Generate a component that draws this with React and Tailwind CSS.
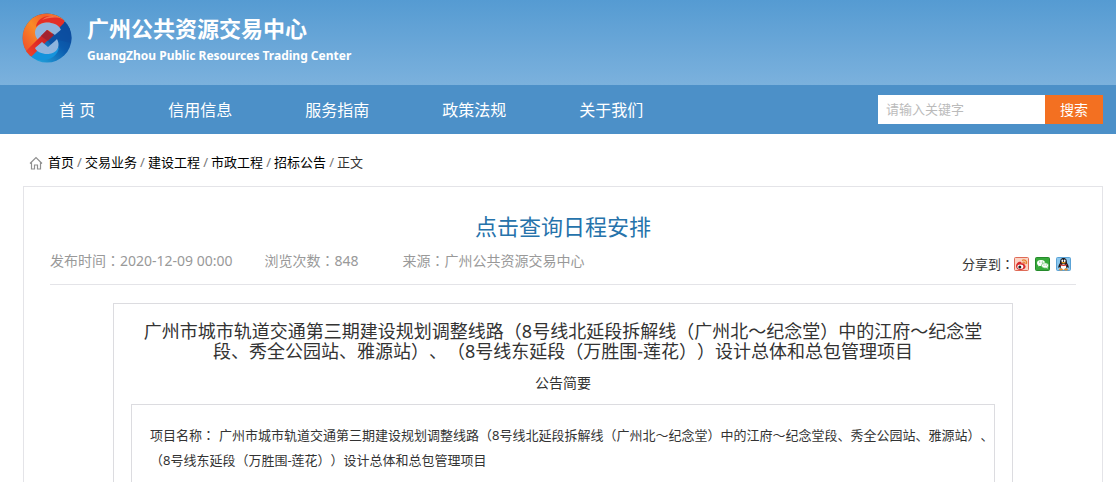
import React from "react";

const navItems = ["首 页", "信用信息", "服务指南", "政策法规", "关于我们"];
const crumbs = ["首页", "交易业务", "建设工程", "市政工程", "招标公告"];

// full-width colon, centred in its cell
function Colon() {
  return <span className="font-['Noto_Sans_CJK_TC',sans-serif]">：</span>;
}

function Logo() {
  return (
    <svg viewBox="0 0 50 50" className="size-[50px] shrink-0" aria-hidden="true">
      <defs>
        <clipPath id="disc">
          <circle cx="25" cy="25" r="24.5" />
        </clipPath>
        <linearGradient id="warm" x1="0" y1="0.7" x2="1" y2="0">
          <stop offset="0" stopColor="#f0502a" />
          <stop offset="0.35" stopColor="#f98b28" />
          <stop offset="0.6" stopColor="#f2622a" />
          <stop offset="1" stopColor="#f3a03a" />
        </linearGradient>
        <linearGradient id="cool" x1="1" y1="0" x2="0" y2="1">
          <stop offset="0" stopColor="#0c3f8e" />
          <stop offset="0.45" stopColor="#0b5cae" />
          <stop offset="1" stopColor="#2cc0ef" />
        </linearGradient>
        <linearGradient id="band" x1="1" y1="0" x2="0" y2="1">
          <stop offset="0" stopColor="#a81f2c" />
          <stop offset="0.5" stopColor="#e02a25" />
          <stop offset="1" stopColor="#f04a2a" />
        </linearGradient>
      </defs>
      <g clipPath="url(#disc)">
        <rect width="50" height="50" fill="url(#cool)" />
        <path d="M0 0H50V3L42 9L8 43L0 50Z" fill="url(#warm)" />
        <path d="M14 14C15 4 28 -1 42 7L42 10L37 15C31 8 20 8 14 14Z" fill="#e52e27" />
        <path d="M20 7C25 2 33 2 38 5C31 4 25 5 20 7Z" fill="#f4744a" />
        <path d="M37 34C36 46 20 51 9 44L6 41L14 34C20 42 30 42 37 34Z" fill="#1493dc" />
        <path d="M14 24C10 14 20 8 29 10C35 11 38 14 39 17L33 22L26 17L16 27Z" fill="#8fb4de" />
        <path d="M25 17L31 22L9 44L2 40Z" fill="url(#band)" />
        <path d="M25 17L32 22L26 28L19 23Z" fill="#a3222f" />
        <path d="M26 28L42 14L50 6V30L36 27L30 33Z" fill="#0d4d9f" opacity="0.7" />
        <path d="M35 26C40 36 32 42 23 41C18 40 14 38 13 35L20 29L26 34L33 28Z" fill="#8fb4de" />
      </g>
    </svg>
  );
}

function HomeIcon() {
  return (
    <svg viewBox="0 0 14 14" className="size-3.5" fill="none" stroke="#8f8f8f" strokeWidth="1.2" aria-hidden="true">
      <path d="M1 7.5L7 1.5L13 7.5M2.5 6.5V13H5.5V9H8.5V13H11.5V6.5" />
    </svg>
  );
}

function WeiboIcon() {
  return (
    <svg viewBox="0 0 16 16" className="size-4" aria-hidden="true">
      <rect x="0.5" y="1.5" width="14" height="13" rx="1" fill="#fbd3c4" stroke="#df6b57" />
      <path d="M8 4.5C10.5 3 13.5 5 12.5 8M8.5 6.5C10 5.5 11.5 6.5 11 8" fill="none" stroke="#e8842f" strokeWidth="1.2" />
      <path d="M2 10C2 7.5 5 5 7 6C8 6.5 7 7.5 8 7.5C10 7 11 8 10.5 9C13 10 11 14 6.5 14C4 14 2 12.5 2 10Z" fill="#d92b2b" />
      <ellipse cx="6.3" cy="10.7" rx="3" ry="2.2" fill="#fff" />
      <circle cx="5.8" cy="10.9" r="1.5" fill="#222" />
    </svg>
  );
}

function WechatIcon() {
  return (
    <svg viewBox="0 0 16 16" className="size-4" aria-hidden="true">
      <rect x="0.5" y="1.5" width="14" height="13" rx="1" fill="#36a93a" stroke="#258a2b" />
      <path d="M3.5 9L3.2 10.6L4.700 9.8L6 9Z" fill="#fff" />
      <ellipse cx="6" cy="7" rx="4" ry="3" fill="#fff" />
      <ellipse cx="10" cy="9.5" rx="3.5" ry="2.7" fill="#fff" stroke="#36a93a" strokeWidth="0.6" />
      <path d="M11 11.5L12.5 13L12.5 11Z" fill="#fff" />
      <g fill="#36a93a">
        <circle cx="4.7" cy="6" r="0.6" />
        <circle cx="7.3" cy="6" r="0.6" />
        <circle cx="9" cy="9" r="0.5" />
        <circle cx="11.2" cy="9" r="0.5" />
      </g>
    </svg>
  );
}

function QQIcon() {
  return (
    <svg viewBox="0 0 16 16" className="size-4" aria-hidden="true">
      <rect x="0.5" y="1.5" width="14" height="13" rx="1" fill="#8cc8ee" stroke="#5ba3d6" />
      <path d="M7.5 2C4.500 2 4 4.5 4 7C2.5 9 2 11 2.5 12L4 11L5 13H10L11 11L12.5 12C13 11 12.5 9 11 7C11 4.5 10.5 2 7.5 2Z" fill="#1b1b22" />
      <ellipse cx="7.5" cy="10.8" rx="2.7" ry="2.6" fill="#fff" />
      <ellipse cx="6.3" cy="4.8" rx="0.9" ry="1.2" fill="#fff" />
      <ellipse cx="8.7" cy="4.8" rx="0.9" ry="1.2" fill="#fff" />
      <ellipse cx="7.5" cy="6.8" rx="2.2" ry="0.8" fill="#f7a823" />
      <path d="M4 8C6 9.3 9 9.3 11 8V9.2C9 10.3 6 10.3 4 9.2Z" fill="#dd2d23" />
      <ellipse cx="5" cy="13.5" rx="2" ry="0.9" fill="#f0902a" />
      <ellipse cx="10" cy="13.5" rx="2" ry="0.9" fill="#f0902a" />
    </svg>
  );
}

export default function App() {
  return (
    <div className="min-h-screen bg-white font-['Noto_Sans','Noto_Sans_CJK_SC',sans-serif] text-[#333] [text-spacing-trim:space-all]">
      <header>
        <div className="flex h-[85px] items-start gap-[15px] bg-linear-to-b from-[#559bd2] to-[#7bb1dd] pt-[13px] pl-[22px] text-white">
          <Logo />
          <div className="pt-px font-bold">
            <h1 className="text-[22px] leading-7">广州公共资源交易中心</h1>
            <p className="text-xs leading-7">GuangZhou Public Resources Trading Center</p>
          </div>
        </div>
        <div className="flex h-[49px] items-center justify-between bg-[#4c90c8] pr-[13px] pl-[23px]">
          <nav className="flex gap-px text-base text-white">
            {navItems.map((item) => (
              <a key={item} href="#" className="px-9">{item}</a>
            ))}
          </nav>
          <form className="flex h-[29px]" onSubmit={(e) => e.preventDefault()}>
            <input
              type="text"
              aria-label="请输入关键字"
              placeholder="请输入关键字"
              className="w-[167px] bg-white px-2 text-[13px] outline-none placeholder:text-[#bbb]"
            />
            <button type="submit" className="w-[58px] bg-[#f37021] text-sm text-white">搜索</button>
          </form>
        </div>
      </header>

      <main className="pr-[13px] pl-[23px]">
        <div className="flex h-[52px] items-center pt-1.5 pl-1.5 text-[13px] text-black">
          <HomeIcon />
          <nav className="ml-[5px] flex">
            {crumbs.map((crumb) => (
              <React.Fragment key={crumb}>
                <a href="#">{crumb}</a>
                <span className="w-[11px] text-center text-[#777]">/</span>
              </React.Fragment>
            ))}
            <span className="text-[#333]">正文</span>
          </nav>
        </div>

        <section className="border border-[#e4e4e8] px-[26px] pt-[23px]">
          <h2 className="text-center text-[22px] leading-8 text-[#2673ab]">
            <a href="#">点击查询日程安排</a>
          </h2>
          <div className="flex items-start justify-between border-b border-[#e4e4e8] pt-1.5 pb-2 text-sm leading-6 text-[#999]">
            <div className="flex">
              <span>发布时间<Colon />2020-12-09 00:00</span>
              <span className="ml-8">浏览次数<Colon />848</span>
              <span className="ml-11">来源<Colon />广州公共资源交易中心</span>
            </div>
            <div className="flex items-center pt-1 pr-1 text-[13px] leading-6 text-[#333]">
              <span>分享到<Colon /></span>
              <div className="flex gap-[5px]">
                <a href="#" aria-label="新浪微博"><WeiboIcon /></a>
                <a href="#" aria-label="微信"><WechatIcon /></a>
                <a href="#" aria-label="QQ好友"><QQIcon /></a>
              </div>
            </div>
          </div>

          <article className="mx-[63px] mt-[18px] border border-[#dcdce0] px-[17px] pt-[17px]">
            <h3 className="text-center text-lg leading-5">
              广州市城市轨道交通第三期建设规划调整线路（8号线北延段拆解线（广州北～纪念堂）中的江府～纪念堂
              <br />
              段、秀全公园站、雅源站）、（8号线东延段（万胜围-莲花））设计总体和总包管理项目
            </h3>
            <p className="pt-3 pb-[11px] text-center text-sm leading-5">公告简要</p>
            <div className="border border-[#dcdce0] py-[17px] pl-[18px] text-[13px] leading-[25px]">
              <p>
                项目名称<Colon />
                <span className="ml-1">
                  广州市城市轨道交通第三期建设规划调整线路（8号线北延段拆解线（广州北～纪念堂）中的江府～纪念堂段、秀全公园站、雅源站）、（8号线东延段（万胜围-莲花））设计总体和总包管理项目
                </span>
              </p>
            </div>
          </article>
        </section>
      </main>
    </div>
  );
}
